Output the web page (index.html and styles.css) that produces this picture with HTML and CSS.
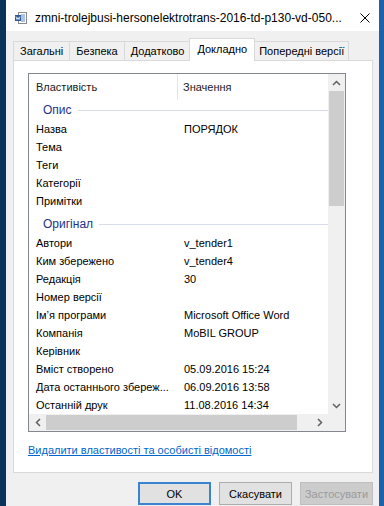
FILE: index.html
```
<!DOCTYPE html>
<html lang="uk">
<head>
  <meta charset="UTF-8" />
  <title>Властивості</title>
  <link rel="stylesheet" href="styles.css">
</head>
<body>

  <div class="window">
    <div class="titlebar">
      <svg class="doc-icon" width="12" height="12" viewBox="0 0 12 12">
        <rect x="3.5" y="0.5" width="8" height="11" fill="#fff" stroke="#8a8a8a" />
        <line x1="6" y1="3" x2="10" y2="3" stroke="#5b86c5" />
        <line x1="6" y1="5" x2="10" y2="5" stroke="#5b86c5" />
        <line x1="6" y1="7" x2="10" y2="7" stroke="#5b86c5" />
        <line x1="6" y1="9" x2="10" y2="9" stroke="#5b86c5" />
        <rect x="0" y="3" width="6" height="6" fill="#2b5797" />
        <polyline points="1,4.5 2,7.5 3,5.5 4,7.5 5,4.5" fill="none" stroke="#fff" stroke-width="0.8" />
      </svg>
      <span class="title">zmni-trolejbusi-hersonelektrotrans-2016-td-p130-vd-050...</span>
      <svg class="close" width="10" height="10" viewBox="0 0 10 10">
        <line x1="0.5" y1="0.5" x2="9.5" y2="9.5" stroke="#000" />
        <line x1="9.5" y1="0.5" x2="0.5" y2="9.5" stroke="#000" />
      </svg>
    </div>

    <div class="tabs">
      <div class="tab">Загальні</div>
      <div class="tab">Безпека</div>
      <div class="tab">Додатково</div>
      <div class="tab active">Докладно</div>
      <div class="tab last">Попередні версії</div>
    </div>

    <div class="panel">
      <div class="listbox">
        <div class="list-view">
          <div class="list-head">
            <div class="col-name">Властивість</div>
            <div class="col-value">Значення</div>
          </div>

          <div class="group"><span>Опис</span></div>
          <div class="row"><div class="col-name">Назва</div><div class="col-value">ПОРЯДОК</div></div>
          <div class="row"><div class="col-name">Тема</div><div class="col-value"></div></div>
          <div class="row"><div class="col-name">Теги</div><div class="col-value"></div></div>
          <div class="row"><div class="col-name">Категорії</div><div class="col-value"></div></div>
          <div class="row"><div class="col-name">Примітки</div><div class="col-value"></div></div>

          <div class="group second"><span>Оригінал</span></div>
          <div class="row"><div class="col-name">Автори</div><div class="col-value">v_tender1</div></div>
          <div class="row"><div class="col-name">Ким збережено</div><div class="col-value">v_tender4</div></div>
          <div class="row"><div class="col-name">Редакція</div><div class="col-value">30</div></div>
          <div class="row"><div class="col-name">Номер версії</div><div class="col-value"></div></div>
          <div class="row"><div class="col-name">Ім’я програми</div><div class="col-value">Microsoft Office Word</div></div>
          <div class="row"><div class="col-name">Компанія</div><div class="col-value">MoBIL GROUP</div></div>
          <div class="row"><div class="col-name">Керівник</div><div class="col-value"></div></div>
          <div class="row"><div class="col-name">Вміст створено</div><div class="col-value">05.09.2016 15:24</div></div>
          <div class="row"><div class="col-name">Дата останнього збереж...</div><div class="col-value">06.09.2016 13:58</div></div>
          <div class="row"><div class="col-name">Останній друк</div><div class="col-value">11.08.2016 14:34</div></div>
        </div>

        <div class="vscroll">
          <div class="sb-btn">
            <svg width="9" height="6" viewBox="0 0 9 6"><polyline points="1,5 4.5,1.5 8,5" fill="none" stroke="#606060" stroke-width="1.5" /></svg>
          </div>
          <div class="v-thumb"></div>
          <div class="sb-track"></div>
          <div class="sb-btn">
            <svg width="9" height="6" viewBox="0 0 9 6"><polyline points="1,1 4.5,4.5 8,1" fill="none" stroke="#606060" stroke-width="1.5" /></svg>
          </div>
        </div>

        <div class="hscroll">
          <div class="sb-btn">
            <svg width="6" height="9" viewBox="0 0 6 9"><polyline points="5,1 1.5,4.5 5,8" fill="none" stroke="#606060" stroke-width="1.5" /></svg>
          </div>
          <div class="h-thumb"></div>
          <div class="sb-track"></div>
          <div class="sb-btn">
            <svg width="6" height="9" viewBox="0 0 6 9"><polyline points="1,1 4.5,4.5 1,8" fill="none" stroke="#606060" stroke-width="1.5" /></svg>
          </div>
        </div>

        <div class="corner"></div>
      </div>

      <a class="remove-link" href="#">Видалити властивості та особисті відомості</a>
    </div>

    <div class="buttons">
      <button class="btn default">OK</button>
      <button class="btn">Скасувати</button>
      <button class="btn" disabled>Застосувати</button>
    </div>
  </div>

</body>
</html>
```
FILE: styles.css
```
* {
  box-sizing: border-box;
  margin: 0;
  padding: 0;
}

body {
  width: 384px;
  height: 506px;
  overflow: hidden;
  font-family: 'Liberation Sans', Arial, sans-serif;
  font-size: 11px;
  color: #000;
  /* desktop strips left and right of the dialog */
  background: linear-gradient(90deg, #0b3359 0 6px, #f0f0f0 6px 379px, #1b62ad 379px);
}

.window {
  margin-left: 6px;
  width: 373px;
  height: 506px;
  background-color: #f0f0f0;
}

/* Title bar */
.titlebar {
  height: 31px;
  background-color: #fff;
  display: flex;
  align-items: center;
  padding: 4px 0 0 9px;
}

.doc-icon {
  flex-shrink: 0;
  margin-right: 8px;
}

.title {
  flex: 1;
  font-size: 12px;
  white-space: nowrap;
  overflow: hidden;
}

.close {
  flex-shrink: 0;
  margin: 0 9px 0 10px;
}

/* Tabs */
.tabs {
  display: flex;
  align-items: flex-end;
  height: 22px;
  margin: 7px 0 0 7px;
}

.tab {
  height: 19px;
  line-height: 18px;
  padding: 0 6px;
  background-color: #f0f0f0;
  border: 1px solid #d9d9d9;
  border-bottom: none;
  border-left: none;
  white-space: nowrap;
}

.tab:first-child {
  border-left: 1px solid #d9d9d9;
}

.tab.last {
  padding: 0 4px 0 6px;
}

.tab.active {
  position: relative;
  z-index: 1;
  height: 23px;
  line-height: 20px;
  margin: 0 -2px -1px -2px;
  padding: 0 7px;
  background-color: #fff;
  border-left: 1px solid #d9d9d9;
}

/* Panel */
.panel {
  margin-left: 7px;
  width: 360px;
  height: 413px;
  background-color: #fff;
  border: 1px solid #d9d9d9;
  padding: 12px 0 0 14px;
}

.listbox {
  width: 318px;
  height: 359px;
  border: 1px solid #828790;
  display: grid;
  grid-template-columns: 1fr 17px;
  grid-template-rows: 1fr 17px;
}

.list-view {
  overflow: hidden;
}

.list-head {
  display: flex;
  height: 26px;
  line-height: 26px;
  color: #1a1a1a;
}

.list-head .col-name {
  border-right: 1px solid #e5e5e5;
}

.col-name {
  width: 149px;
  flex-shrink: 0;
  padding-left: 7px;
  white-space: nowrap;
  overflow: hidden;
}

.col-value {
  padding-left: 6px;
  white-space: nowrap;
}

.list-head .col-value {
  padding-left: 5px;
}

.group {
  height: 20px;
  display: flex;
  align-items: center;
  padding-left: 14px;
  color: #1e3287;
  font-size: 12px;
}

.group::after {
  content: '';
  flex: 1;
  height: 1px;
  margin-left: 6px;
  background-color: #d6dde8;
}

.group.second {
  margin-top: 4px;
}

.row {
  display: flex;
  height: 18px;
  line-height: 18px;
}

/* Scrollbars */
.vscroll,
.hscroll,
.corner {
  background-color: #f0f0f0;
}

.vscroll {
  display: flex;
  flex-direction: column;
}

.hscroll {
  display: flex;
}

.sb-btn {
  width: 17px;
  height: 17px;
  flex-shrink: 0;
  display: flex;
  align-items: center;
  justify-content: center;
}

.sb-track {
  flex: 1;
}

.v-thumb {
  height: 115px;
  margin: 0 1px;
  background-color: #cdcdcd;
}

.h-thumb {
  width: 251px;
  margin: 1px 0;
  background-color: #cdcdcd;
}

.remove-link {
  display: inline-block;
  margin-top: 11px;
  line-height: 15px;
  color: #0066cc;
  text-decoration: underline;
}

/* Buttons */
.buttons {
  display: flex;
  justify-content: flex-end;
  gap: 8px;
  padding: 9px 6px 0 0;
}

.btn {
  width: 73px;
  height: 23px;
  font-family: inherit;
  font-size: 11px;
  color: #000;
  background-color: #e1e1e1;
  border: 1px solid #adadad;
}

.btn.default {
  border: 2px solid #3a84cf;
}

.btn:disabled {
  background-color: #cccccc;
  border-color: #bfbfbf;
  color: #9a9a9a;
}
```
